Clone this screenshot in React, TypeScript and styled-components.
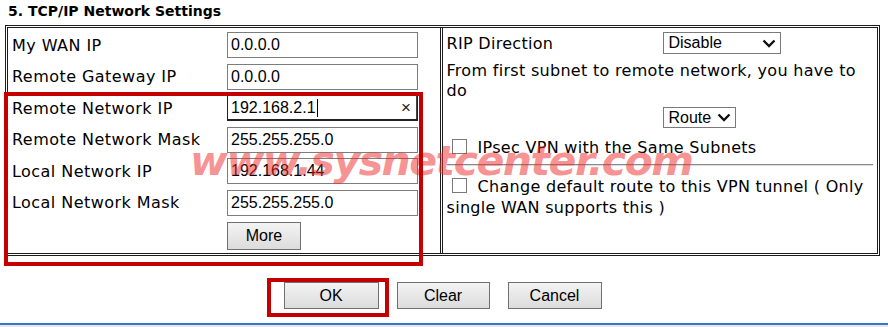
import styled, { createGlobalStyle } from 'styled-components';

const GlobalStyle = createGlobalStyle`
  html, body {
    margin: 0;
    padding: 0;
    background: #ffffff;
  }
  * {
    box-sizing: border-box;
  }
`;

const Page = styled.div`
  position: relative;
  width: 888px;
  height: 327px;
  overflow: hidden;
  background: #ffffff;
  color: #000;
`;

const Title = styled.div`
  height: 25px;
  padding: 3px 0 0 8px;
  font-family: 'DejaVu Sans', Verdana, sans-serif;
  font-size: 14px;
  font-weight: bold;
  line-height: 17px;
`;

const SettingsTable = styled.div`
  margin-left: 5px;
  width: 875px;
  height: 231px;
  border: 3px double #1c1c1c;
  display: grid;
  grid-template-columns: 1fr 1fr;
`;

const LeftCell = styled.div`
  padding: 4px;
  border-right: 3px double #1c1c1c;
  display: flex;
  flex-direction: column;
  gap: 5.5px;
`;

const RightCell = styled.div`
  padding: 4px;
  font-family: 'DejaVu Sans', Verdana, sans-serif;
  font-size: 16px;
  letter-spacing: 0.3px;
`;

const FieldRow = styled.div`
  display: flex;
  align-items: center;
  height: 26px;
`;

const Label = styled.div`
  width: 215px;
  font-family: 'DejaVu Sans', Verdana, sans-serif;
  font-size: 16px;
  letter-spacing: 0.45px;
  white-space: nowrap;
`;

const TextInput = styled.input`
  width: 191px;
  height: 26px;
  border: 1px solid #7d7d7d;
  padding: 0 3px;
  margin: 0;
  font-family: 'Liberation Sans', Arial, sans-serif;
  font-size: 16px;
  color: #000;
  background: #fff;
  outline: none;
`;

const FocusedField = styled.div`
  width: 191px;
  height: 26px;
  border: 1px solid #222;
  box-shadow: inset 0 -1px 0 #222, inset -1px 0 0 #444;
  padding: 0 6px 0 3px;
  display: flex;
  align-items: center;
  font-family: 'Liberation Sans', Arial, sans-serif;
  font-size: 16px;
`;

const Caret = styled.span`
  width: 1px;
  height: 18px;
  background: #000;
  margin-left: 1px;
`;

const ClearMark = styled.span`
  margin-left: auto;
  font-size: 17px;
  color: #222;
`;

const GrayButton = styled.button<{ $w: number; $h: number }>`
  width: ${p => p.$w}px;
  height: ${p => p.$h}px;
  margin: 0;
  padding: 0;
  border: 1px solid #707070;
  border-radius: 0;
  background: linear-gradient(#f3f3f3, #dcdcdc);
  font-family: 'Liberation Sans', Arial, sans-serif;
  font-size: 16px;
  color: #000;
`;

const MoreRow = styled.div`
  padding-left: 215px;
  margin-top: 0.5px;
`;

const SelectRow = styled.div<{ $top: number }>`
  display: flex;
  align-items: center;
  margin-top: ${p => p.$top}px;
`;

const SelectLabel = styled.div`
  width: 216px;
`;

const SelectBox = styled.div<{ $w: number; $h: number }>`
  width: ${p => p.$w}px;
  height: ${p => p.$h}px;
  border: 1px solid #7a7a7a;
  padding: 0 4px 0 5px;
  display: flex;
  align-items: center;
  justify-content: space-between;
  font-family: 'Liberation Sans', Arial, sans-serif;
  font-size: 16px;
  letter-spacing: 0;
  background: #fff;
`;

const Paragraph = styled.div`
  margin-top: 7px;
  line-height: 20px;
`;

const CheckLine = styled.div<{ $top: number }>`
  margin-top: ${p => p.$top}px;
  line-height: 21px;
`;

const Box = styled.input`
  appearance: none;
  width: 15px;
  height: 15px;
  margin: 0 11px 0 5px;
  border: 1px solid #7a7a7a;
  background: #fff;
  vertical-align: -1px;
`;

const Rule = styled.div`
  margin-top: 6px;
  border-top: 1px solid #8a8a8a;
  border-bottom: 1px solid #dcdcdc;
`;

const ButtonBar = styled.div`
  margin-top: 26px;
  display: flex;
  justify-content: center;
  gap: 18px;
  padding-right: 3px;
`;

const TaskStrip = styled.div`
  margin-top: 14px;
  height: 4px;
  border-top: 2px solid #2d7ad0;
  background: #e6e6e6;
`;

const Highlight = styled.div<{ $x: number; $y: number; $w: number; $h: number }>`
  position: absolute;
  left: ${p => p.$x}px;
  top: ${p => p.$y}px;
  width: ${p => p.$w}px;
  height: ${p => p.$h}px;
  border: 4px solid #c40000;
  pointer-events: none;
`;

const Watermark = styled.div`
  position: absolute;
  left: 190px;
  top: 141px;
  font-family: 'DejaVu Sans', Verdana, sans-serif;
  font-size: 41px;
  font-weight: bold;
  font-style: italic;
  letter-spacing: -1.5px;
  line-height: 41px;
  color: rgba(240, 40, 40, 0.5);
  white-space: nowrap;
  pointer-events: none;
`;

const Chevron = () => (
  <svg width="14" height="9" viewBox="0 0 14 9">
    <polyline points="1.5,1.5 7,7 12.5,1.5" fill="none" stroke="#111" strokeWidth="2.4" />
  </svg>
);

const fields = [
  { label: 'My WAN IP', value: '0.0.0.0' },
  { label: 'Remote Gateway IP', value: '0.0.0.0' },
  { label: 'Remote Network IP', value: '192.168.2.1', focused: true },
  { label: 'Remote Network Mask', value: '255.255.255.0' },
  { label: 'Local Network IP', value: '192.168.1.44' },
  { label: 'Local Network Mask', value: '255.255.255.0' },
];

export default function App() {
  return (
    <Page>
      <GlobalStyle />
      <Title>5. TCP/IP Network Settings</Title>
      <SettingsTable>
        <LeftCell>
          {fields.map(f => (
            <FieldRow key={f.label}>
              <Label>{f.label}</Label>
              {f.focused ? (
                <FocusedField>
                  {f.value}
                  <Caret />
                  <ClearMark>×</ClearMark>
                </FocusedField>
              ) : (
                <TextInput defaultValue={f.value} readOnly />
              )}
            </FieldRow>
          ))}
          <MoreRow>
            <GrayButton $w={74} $h={28}>More</GrayButton>
          </MoreRow>
        </LeftCell>
        <RightCell>
          <SelectRow $top={0}>
            <SelectLabel>RIP Direction</SelectLabel>
            <SelectBox $w={118} $h={22}>
              Disable
              <Chevron />
            </SelectBox>
          </SelectRow>
          <Paragraph>From first subnet to remote network, you have to do</Paragraph>
          <SelectRow $top={6}>
            <SelectLabel />
            <SelectBox $w={73} $h={21}>
              Route
              <Chevron />
            </SelectBox>
          </SelectRow>
          <CheckLine $top={9}>
            <Box type="checkbox" />
            IPsec VPN with the Same Subnets
          </CheckLine>
          <Rule />
          <CheckLine $top={10}>
            <Box type="checkbox" />
            Change default route to this VPN tunnel ( Only single WAN supports this )
          </CheckLine>
        </RightCell>
      </SettingsTable>
      <ButtonBar>
        <GrayButton $w={95} $h={27}>OK</GrayButton>
        <GrayButton $w={93} $h={27}>Clear</GrayButton>
        <GrayButton $w={94} $h={27}>Cancel</GrayButton>
      </ButtonBar>
      <TaskStrip />
      <Watermark>www.sysnetcenter.com</Watermark>
      <Highlight $x={4} $y={92} $w={419} $h={174} />
      <Highlight $x={267} $y={278} $w={122} $h={39} />
    </Page>
  );
}
